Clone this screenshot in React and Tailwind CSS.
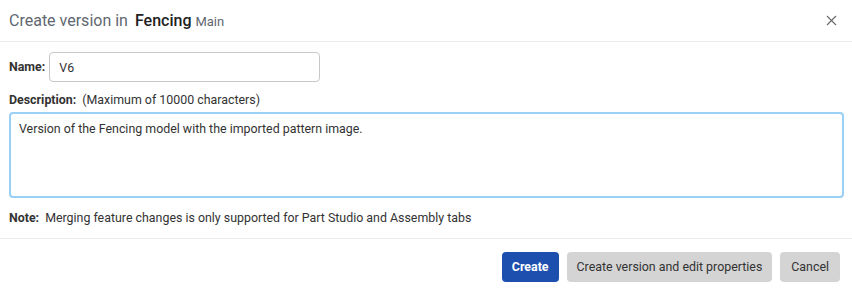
import { X } from 'lucide-react';

export default function App() {
  return (
    <div className="w-[852px] h-[289px] bg-white flex flex-col text-[#333] [font-family:Roboto,'Noto_Sans',sans-serif]">
      {/* Header */}
      <div className="h-[42px] flex items-center justify-between pl-[9px] pr-[12px] border-b border-[#ececec]">
        <div className="flex items-baseline">
          <span className="text-[16px] text-[#5f6770]">Create version in</span>
          <span className="ml-[7px] text-[16px] font-medium text-[#222]">Fencing</span>
          <span className="ml-[4px] text-[13px] text-[#5f6770]">Main</span>
        </div>
        <X className="w-[17px] h-[17px] text-[#666]" strokeWidth={1.5} />
      </div>

      {/* Body */}
      <div className="h-[197px] px-[9px] pt-[10px] border-b border-[#ececec] text-[12.4px]">
        <div className="flex items-center gap-[4px]">
          <label className="font-bold text-[#333]">Name:</label>
          <input
            defaultValue="V6"
            className="w-[271px] h-[30px] rounded-[4px] border border-[#c8c8c8] px-[9px] text-[12.4px] text-[#333] outline-none"
          />
        </div>
        <div className="mt-[9px]">
          <span className="font-bold">Description:</span>
          <span className="ml-[6px]">(Maximum of 10000 characters)</span>
        </div>
        <textarea
          defaultValue="Version of the Fencing model with the imported pattern image."
          className="mt-[2px] block w-[835px] h-[86px] resize-none rounded-[4px] border-2 border-[#9ad0f5] px-[8px] py-[6px] text-[12.4px] text-[#333] outline-none"
        />
        <div className="mt-[11px]">
          <span className="font-bold">Note:</span>
          <span className="ml-[6px]">Merging feature changes is only supported for Part Studio and Assembly tabs</span>
        </div>
      </div>

      {/* Footer */}
      <div className="flex-1 flex items-start justify-end gap-[8px] pt-[13px] pr-[12px]">
        <button className="h-[30px] px-[10px] rounded-[4px] bg-[#1d4fae] text-white text-[12.4px] font-bold">Create</button>
        <button className="h-[30px] px-[10px] rounded-[4px] bg-[#d4d4d4] text-[#333] text-[12.4px]">Create version and edit properties</button>
        <button className="h-[30px] px-[11px] rounded-[4px] bg-[#d4d4d4] text-[#333] text-[12.4px]">Cancel</button>
      </div>
    </div>
  );
}
